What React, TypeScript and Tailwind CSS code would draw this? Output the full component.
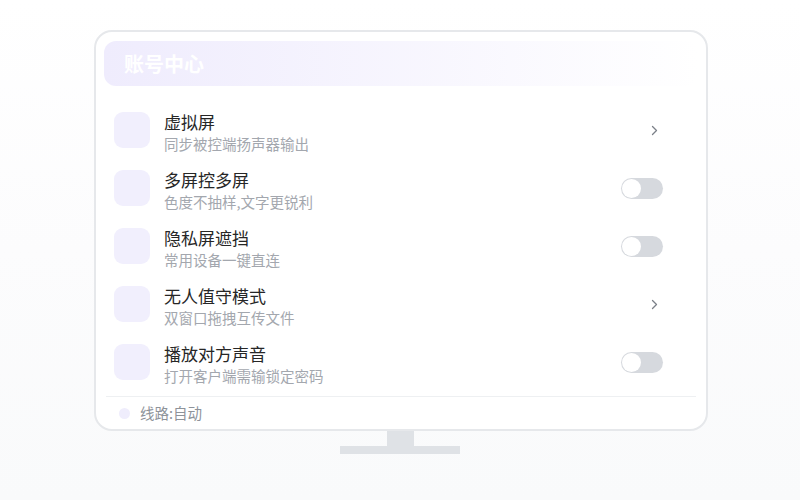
import React from 'react';

type Row = {
  title: string;
  desc: string;
  action: 'arrow' | 'toggle';
};

const rows: Row[] = [
  { title: '虚拟屏', desc: '同步被控端扬声器输出', action: 'arrow' },
  { title: '多屏控多屏', desc: '色度不抽样,文字更锐利', action: 'toggle' },
  { title: '隐私屏遮挡', desc: '常用设备一键直连', action: 'toggle' },
  { title: '无人值守模式', desc: '双窗口拖拽互传文件', action: 'arrow' },
  { title: '播放对方声音', desc: '打开客户端需输锁定密码', action: 'toggle' },
];

const Toggle: React.FC = () => (
  <div className="w-[42px] h-[21px] rounded-full bg-[#d6d9de] p-[1px] flex items-center">
    <div className="w-[19px] h-[19px] rounded-full bg-white" />
  </div>
);

const Arrow: React.FC = () => (
  <svg width="7" height="11" viewBox="0 0 7 11" className="mr-[5px]">
    <path d="M1.5 1.5 L5.5 5.5 L1.5 9.5" fill="none" stroke="#7b8088" strokeWidth="1.3" strokeLinecap="round" strokeLinejoin="round" />
  </svg>
);

const App: React.FC = () => {
  return (
    <div
      className="w-full h-[500px] bg-gradient-to-b from-white via-[#fcfcfd] to-[#f9fafb] flex flex-col items-center pt-[30px]"
      style={{ fontFamily: '"Noto Sans CJK SC", "Noto Sans", sans-serif' }}
    >
      <div className="ml-[2px] w-[614px] h-[401px] rounded-[18px] border-2 border-[#e6e8eb] bg-white px-[8px] pt-[9px] flex flex-col">
        <div className="h-[45px] rounded-[12px] bg-gradient-to-r from-[#efecfd] to-[#efecfd]/0 pl-[20px] flex items-center">
          <span className="text-white text-[20px] font-bold leading-none">账号中心</span>
        </div>

        <div className="mt-[15px] flex flex-col pl-[10px] pr-[35px]">
          {rows.map((r) => (
            <div key={r.title} className="h-[58px] flex items-center">
              <div className="w-[36px] h-[36px] rounded-[9px] bg-[#f1effd] shrink-0" />
              <div className="ml-[14px] flex-1 flex flex-col pt-[5px]">
                <span className="text-[17px] leading-[22px] text-[#262626]">{r.title}</span>
                <span className="text-[14.5px] leading-[22px] text-[#a3a7ae]">{r.desc}</span>
              </div>
              <div className="w-[42px] flex justify-end">
                {r.action === 'toggle' ? <Toggle /> : <Arrow />}
              </div>
            </div>
          ))}
        </div>

        <div className="mt-[5px] mx-[2px] border-t border-[#eef0f2]" />

        <div className="h-[32px] flex items-center pl-[15px]">
          <div className="w-[11px] h-[11px] rounded-full bg-[#efedfc]" />
          <span className="ml-[10px] text-[14.5px] text-[#8e939a]">线路:自动</span>
        </div>
      </div>

      <div className="w-[27px] h-[15px] bg-[#dfe2e6]" />
      <div className="w-[120px] h-[8px] bg-[#dfe2e6]" />
    </div>
  );
};

export default App;
